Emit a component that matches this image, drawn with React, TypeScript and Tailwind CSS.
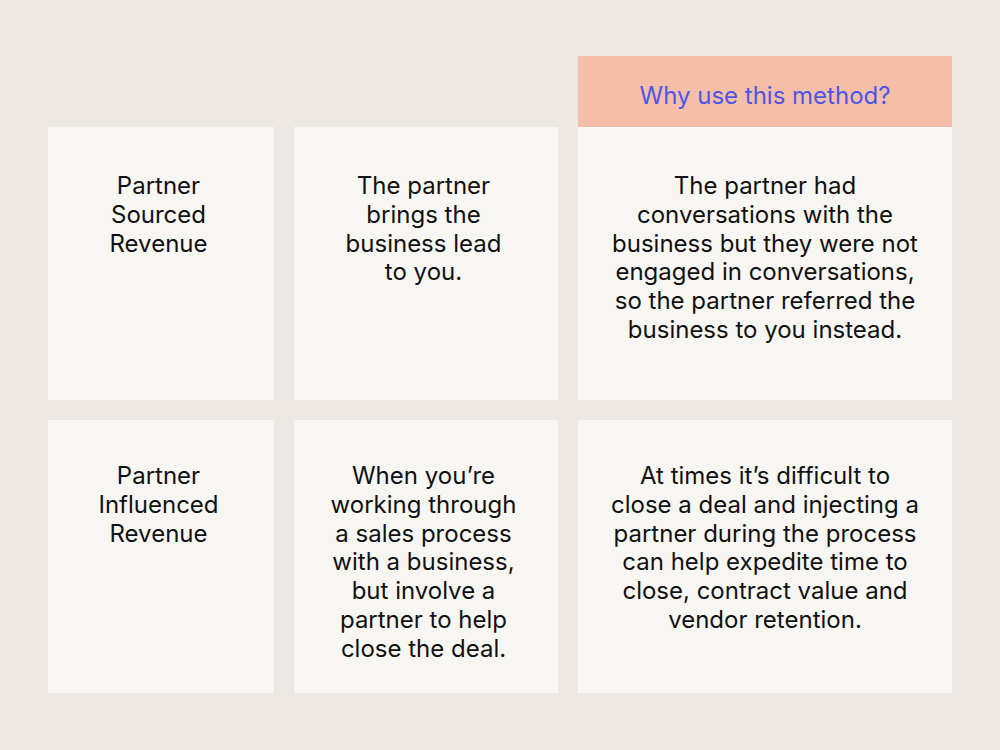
const rows = [
  {
    pad: 'pt-[45px]',
    label: ['Partner', 'Sourced', 'Revenue'],
    what: ['The partner', 'brings the', 'business lead', 'to you.'],
    why: [
      'The partner had',
      'conversations with the',
      'business but they were not',
      'engaged in conversations,',
      'so the partner referred the',
      'business to you instead.',
    ],
  },
  {
    pad: 'pt-[42px]',
    label: ['Partner', 'Influenced', 'Revenue'],
    what: [
      'When you’re',
      'working through',
      'a sales process',
      'with a business,',
      'but involve a',
      'partner to help',
      'close the deal.',
    ],
    why: [
      'At times it’s difficult to',
      'close a deal and injecting a',
      'partner during the process',
      'can help expedite time to',
      'close, contract value and',
      'vendor retention.',
    ],
  },
];

function Cell({lines, pad, nudge}: {lines: string[]; pad: string; nudge?: boolean}) {
  return (
    <div
      className={`h-[273px] bg-[#f7f6f3] text-center text-[24px] leading-[1.2] text-[#111111] ${pad} ${
        nudge ? 'pl-3 pr-[17px]' : 'px-3'
      }`}
    >
      {lines.map((line, i) => (
        <span key={i} className="block whitespace-nowrap">
          {line}
        </span>
      ))}
    </div>
  );
}

export default function App() {
  return (
    <main
      className="min-h-[750px] w-[1000px] bg-[#ede8e3] pl-[48px] pt-[56px]"
      style={{fontFamily: 'Inter, "Noto Sans", sans-serif'}}
    >
      {/* Header */}
      <div className="ml-[530px] h-[71px] w-[374px] bg-[#f6bea8] pt-[26px] text-center text-[24px] leading-[1.2] text-[#4a57e6]">
        Why use this method?
      </div>

      {/* Table */}
      <div className="grid grid-cols-[226px_264px_374px] gap-5">
        {rows.map((row, i) => (
          <div key={i} className="contents">
            <Cell lines={row.label} pad={row.pad} nudge />
            <Cell lines={row.what} pad={row.pad} nudge />
            <Cell lines={row.why} pad={row.pad} />
          </div>
        ))}
      </div>
    </main>
  );
}
